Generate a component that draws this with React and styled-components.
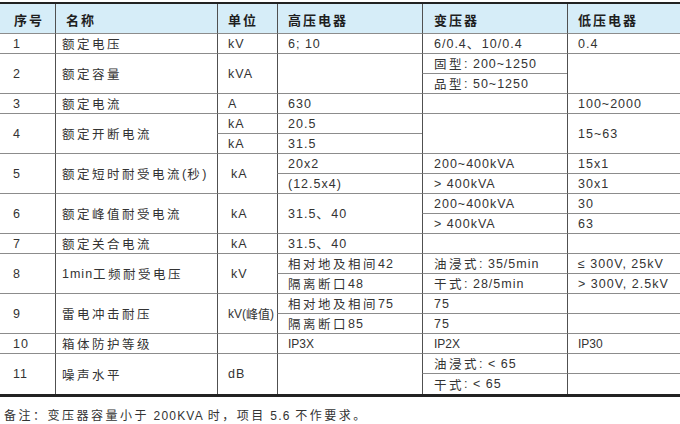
import React from 'react';
import styled, { createGlobalStyle } from 'styled-components';

const Global = createGlobalStyle`
  html, body { margin: 0; padding: 0; background: #fff; }
  body { font-family: "Liberation Sans", "Noto Sans CJK SC", sans-serif; }
`;

const Page = styled.div`
  width: 680px;
  padding-top: 2px;
  color: #333;
`;

const Table = styled.div`
  display: grid;
  grid-template-columns: 55px 162px 60px 145px 145px 1fr;
  grid-template-rows: 30px repeat(18, 20px);
  border-top: 2px solid #222;
  border-bottom: 3px solid #222;
`;

const Cell = styled.div`
  grid-row: ${(p) => p.$row + 1} / span ${(p) => p.$span};
  grid-column: ${(p) => p.$col};
  box-sizing: border-box;
  display: flex;
  align-items: center;
  padding-left: ${(p) => p.$pad}px;
  white-space: nowrap;
  overflow: hidden;
  font-size: ${(p) => (p.$tight ? 12 : 12.5)}px;
  letter-spacing: ${(p) => (p.$tight ? 0 : 1)}px;
  color: #333;
  border-bottom: ${(p) => (p.$last ? 'none' : '1px solid #8c8c8c')};
  border-left: ${(p) => (p.$col > 1 ? '1px solid #505050' : 'none')};
`;

const HeadCell = styled(Cell)`
  background: #d6edf8;
  font-weight: bold;
  font-size: 13px;
  letter-spacing: 2px;
  color: #1e1e1e;
  padding-top: 2px;
`;

const Han = styled.span`
  letter-spacing: ${(p) => (p.$tight ? 0 : 2.5)}px;
`;

const Note = styled.div`
  margin-top: 9px;
  padding-left: 4px;
  font-size: 12px;
  letter-spacing: 1.2px;
  color: #333;
`;

const cjk = /([\u3000-\u303f\u4e00-\u9fff\uff00-\uffef]+)/;

function Txt({ text, tight }) {
  return text.split(cjk).map((part, i) =>
    cjk.test(part) ? (
      <Han key={i} $tight={tight}>{part}</Han>
    ) : (
      <React.Fragment key={i}>{part}</React.Fragment>
    )
  );
}

const colPad = [0, 13, 6, 10, 10, 11, 10];
const headPad = [0, 14, 10, 10, 10, 11, 10];

const headers = ['序号', '名称', '单位', '高压电器', '变压器', '低压电器'];

// [row, col, span, text, pad, tight]
const cells = [
  [1, 1, 1, '1'], [1, 2, 1, '额定电压'], [1, 3, 1, 'kV'], [1, 4, 1, '6; 10'], [1, 5, 1, '6/0.4、10/0.4'], [1, 6, 1, '0.4'],
  [2, 1, 2, '2'], [2, 2, 2, '额定容量'], [2, 3, 2, 'kVA'], [2, 4, 2, ''], [2, 5, 1, '固型: 200~1250'], [3, 5, 1, '品型: 50~1250'], [2, 6, 2, ''],
  [4, 1, 1, '3'], [4, 2, 1, '额定电流'], [4, 3, 1, 'A'], [4, 4, 1, '630'], [4, 5, 1, ''], [4, 6, 1, '100~2000'],
  [5, 1, 2, '4'], [5, 2, 2, '额定开断电流'], [5, 3, 1, 'kA'], [6, 3, 1, 'kA'], [5, 4, 1, '20.5'], [6, 4, 1, '31.5'], [5, 5, 2, ''], [5, 6, 2, '15~63'],
  [7, 1, 2, '5'], [7, 2, 2, '额定短时耐受电流(秒)'], [7, 3, 2, 'kA', 13], [7, 4, 1, '20x2'], [8, 4, 1, '(12.5x4)'], [7, 5, 1, '200~400kVA'], [8, 5, 1, '> 400kVA'], [7, 6, 1, '15x1'], [8, 6, 1, '30x1'],
  [9, 1, 2, '6'], [9, 2, 2, '额定峰值耐受电流'], [9, 3, 2, 'kA', 13], [9, 4, 2, '31.5、40'], [9, 5, 1, '200~400kVA'], [10, 5, 1, '> 400kVA'], [9, 6, 1, '30'], [10, 6, 1, '63'],
  [11, 1, 1, '7'], [11, 2, 1, '额定关合电流'], [11, 3, 1, 'kA', 13], [11, 4, 1, '31.5、40'], [11, 5, 1, ''], [11, 6, 1, ''],
  [12, 1, 2, '8'], [12, 2, 2, '1min 工频耐受电压'], [12, 3, 2, 'kV', 13], [12, 4, 1, '相对地及相间 42'], [13, 4, 1, '隔离断口 48'], [12, 5, 1, '油浸式: 35/5min'], [13, 5, 1, '干式: 28/5min'], [12, 6, 1, '≤ 300V, 25kV'], [13, 6, 1, '> 300V, 2.5kV'],
  [14, 1, 2, '9'], [14, 2, 2, '雷电冲击耐压'], [14, 3, 2, 'kV(峰值)', 10, true], [14, 4, 1, '相对地及相间 75'], [15, 4, 1, '隔离断口 85'], [14, 5, 1, '75'], [15, 5, 1, '75'], [14, 6, 1, ''], [15, 6, 1, ''],
  [16, 1, 1, '10'], [16, 2, 1, '箱体防护等级'], [16, 3, 1, ''], [16, 4, 1, 'IP3X', 10, true], [16, 5, 1, 'IP2X', 11, true], [16, 6, 1, 'IP30', 10, true],
  [17, 1, 2, '11'], [17, 2, 2, '噪声水平'], [17, 3, 2, 'dB'], [17, 4, 2, ''], [17, 5, 1, '油浸式: < 65'], [18, 5, 1, '干式: < 65'], [17, 6, 1, ''], [18, 6, 1, ''],
];

export default function App() {
  return (
    <Page>
      <Global />
      <Table>
        {headers.map((h, i) => (
          <HeadCell key={h} $row={0} $span={1} $col={i + 1} $pad={headPad[i + 1]}>
            {h}
          </HeadCell>
        ))}
        {cells.map(([row, col, span, text, pad, tight]) => (
          <Cell
            key={`${row}-${col}`}
            $row={row}
            $col={col}
            $span={span}
            $pad={pad ?? colPad[col]}
            $tight={tight}
            $last={row + span - 1 === 18}
          >
            <Txt text={text} tight={tight} />
          </Cell>
        ))}
      </Table>
      <Note>
        <Txt text="备注：变压器容量小于 200KVA 时，项目 5.6 不作要求。" />
      </Note>
    </Page>
  );
}
